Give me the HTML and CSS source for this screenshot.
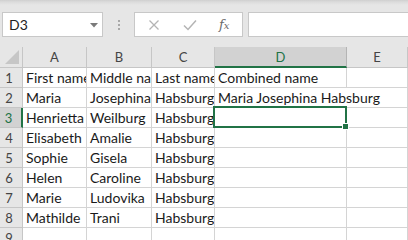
FILE: index.html
```html
<!DOCTYPE html>
<html>
<head>
<meta charset="utf-8">
<link rel="stylesheet" href="styles.css">
</head>
<body>
<div class="app">
  <div class="toolbar">
    <div class="namebox">
      <span class="nb-text">D3</span>
      <svg class="nb-arrow" width="8" height="5" viewBox="0 0 8 5"><path d="M0 0 H8 L4 4.5 Z" fill="#7a7a7a"/></svg>
    </div>
    <div class="sep"><i></i><i></i><i></i></div>
    <div class="btnbox">
      <svg class="ico" width="12" height="12" viewBox="0 0 12 12"><path d="M1.5 1.5 L10.5 10.5 M10.5 1.5 L1.5 10.5" stroke="#b4b4b4" stroke-width="1.3" fill="none"/></svg>
      <svg class="ico" width="14" height="12" viewBox="0 0 14 12"><path d="M1 6.5 L5 10.5 L13 1.5" stroke="#b4b4b4" stroke-width="1.5" fill="none"/></svg>
      <span class="fx">f<span class="fxx">x</span></span>
    </div>
    <div class="formula"></div>
  </div>
  <div class="grid">
    <div class="corner"><svg width="14" height="14" viewBox="0 0 14 14"><path d="M14 0 V14 H0 Z" fill="#c6c6c6"/></svg></div>
    <div class="ch">A</div><div class="ch">B</div><div class="ch">C</div><div class="ch sel">D</div><div class="ch">E</div>

    <div class="rh">1</div><div class="c">First name</div><div class="c">Middle name</div><div class="c">Last name</div><div class="c">Combined name</div><div class="c"></div>
    <div class="rh">2</div><div class="c">Maria</div><div class="c">Josephina</div><div class="c">Habsburg</div><div class="c over">Maria Josephina Habsburg</div><div class="c"></div>
    <div class="rh sel">3</div><div class="c">Henrietta</div><div class="c">Weilburg</div><div class="c">Habsburg</div><div class="c active"><span class="selbox"></span><span class="handle"></span></div><div class="c"></div>
    <div class="rh">4</div><div class="c">Elisabeth</div><div class="c">Amalie</div><div class="c">Habsburg</div><div class="c"></div><div class="c"></div>
    <div class="rh">5</div><div class="c">Sophie</div><div class="c">Gisela</div><div class="c">Habsburg</div><div class="c"></div><div class="c"></div>
    <div class="rh">6</div><div class="c">Helen</div><div class="c">Caroline</div><div class="c">Habsburg</div><div class="c"></div><div class="c"></div>
    <div class="rh">7</div><div class="c">Marie</div><div class="c">Ludovika</div><div class="c">Habsburg</div><div class="c"></div><div class="c"></div>
    <div class="rh">8</div><div class="c">Mathilde</div><div class="c">Trani</div><div class="c">Habsburg</div><div class="c"></div><div class="c"></div>
    <div class="rh">9</div><div class="c"></div><div class="c"></div><div class="c"></div><div class="c"></div><div class="c"></div>
  </div>
</div>
</body>
</html>
```
FILE: styles.css
```css
* { box-sizing: border-box; }
html, body { margin: 0; padding: 0; }
body { width: 408px; height: 240px; overflow: hidden; background: #fff; font-family: "Lato", "Open Sans", sans-serif; }
.app { width: 408px; height: 240px; overflow: hidden; }

.toolbar {
  height: 47px;
  background: linear-gradient(#cfcfcf 0, #dcdcdc 2px, #e6e6e6 5px, #e6e6e6 100%);
  display: flex;
  align-items: flex-start;
  padding-top: 12px;
  padding-left: 2px;
}
.namebox {
  width: 101px; height: 25px;
  background: #fff;
  border: 1px solid #c8c8c8;
  display: flex; align-items: center; justify-content: space-between;
  padding: 0 4px 0 6px;
}
.nb-text { font-family: "Lato", sans-serif; font-size: 14px; color: #222; }
.nb-arrow { margin-top: 1px; }
.sep { width: 31px; height: 25px; display: flex; flex-direction: column; align-items: center; justify-content: center; gap: 2px; }
.sep i { width: 2px; height: 2px; background: #a8a8a8; display: block; }
.btnbox {
  width: 109px; height: 25px;
  background: #fff;
  border: 1px solid #c8c8c8;
  display: flex; align-items: center;
  padding-left: 13px;
}
.btnbox .ico:nth-child(2) { margin-left: 23px; }
.fx { margin-left: 22px; font-family: "DejaVu Serif", "Liberation Serif", serif; font-style: italic; font-size: 13px; color: #6a6a6a; }
.fxx { font-size: 10px; }
.formula { margin-left: 5px; flex: 1; height: 25px; background: #fff; border: 1px solid #c8c8c8; border-right: none; }

.grid {
  display: grid;
  grid-template-columns: 23px 64px 65px 63px 132px 1fr;
  grid-template-rows: 21px repeat(9, 20px);
}
.corner { background: #e6e6e6; border-right: 1px solid #c6c6c6; border-bottom: 1px solid #c6c6c6; display: flex; align-items: flex-end; justify-content: flex-end; padding: 0 3px 3px 0; }
.ch {
  background: #e6e6e6;
  border-right: 1px solid #c6c6c6;
  border-bottom: 1px solid #c6c6c6;
  font-family: "Lato", sans-serif; font-size: 13px; color: #444;
  display: flex; align-items: center; justify-content: center;
}
.ch.sel { background: #d2d2d2; color: #217346; border-bottom: 2px solid #217346; border-right-color: #b4b4b4; }
.rh {
  background: #e6e6e6;
  border-right: 1px solid #c6c6c6;
  border-bottom: 1px solid #c6c6c6;
  font-family: "Lato", sans-serif; font-size: 13px; color: #444;
  display: flex; align-items: center; justify-content: center;
  padding-right: 4px; padding-top: 1px;
}
.rh.sel { background: #d2d2d2; color: #217346; border-right: 2px solid #217346; }
.c {
  border-right: 1px solid #d4d4d4;
  border-bottom: 1px solid #d4d4d4;
  font-size: 14px; color: #1a1a1a;
  white-space: nowrap; overflow: hidden;
  padding: 0 0 0 3px;
  display: flex; align-items: flex-end;
  line-height: 19px;
  position: relative;
}
.c.over { overflow: visible; z-index: 1; border-right-color: transparent; }
.c.active { overflow: visible; }
.selbox { position: absolute; left: -2px; top: -2px; right: -1px; bottom: -1px; border: 2px solid #217346; z-index: 2; }
.handle { position: absolute; right: -3px; bottom: -3px; width: 5px; height: 5px; background: #217346; border: 1px solid #fff; box-sizing: content-box; z-index: 3; }
```
